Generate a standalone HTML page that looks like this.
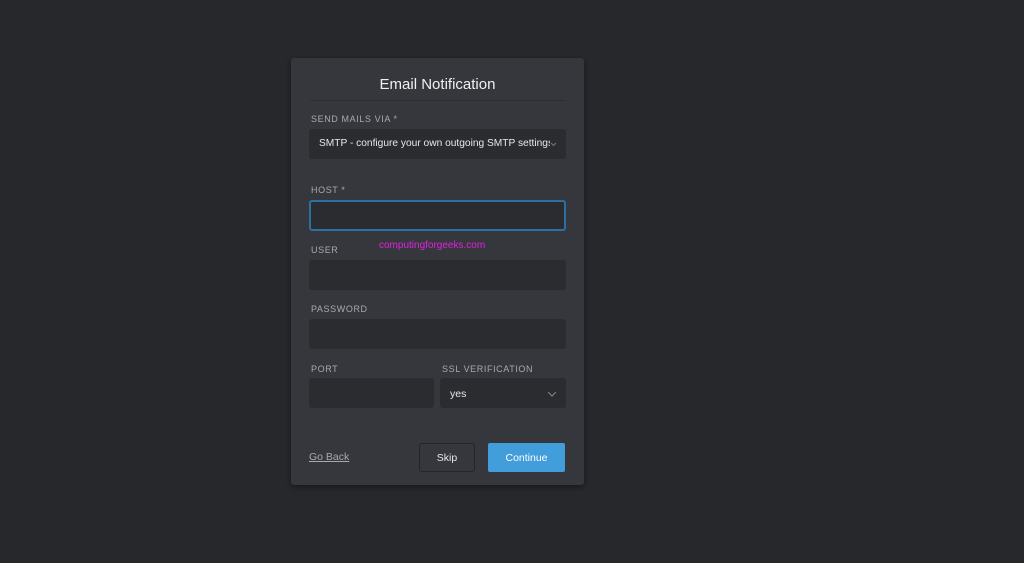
<!DOCTYPE html>
<html><head><style>
body{margin:0;width:1024px;height:563px;background:#27282c;font-family:"Liberation Sans",sans-serif;position:relative;overflow:hidden}
.card{position:absolute;left:291px;top:58px;width:293px;height:427px;background:#36373c;border-radius:3px;box-shadow:0 2px 6px rgba(0,0,0,.4)}
.a{position:absolute}
.title{width:293px;top:76px;text-align:center;color:#f0f0f2;font-size:15px}
.hr{left:310px;width:256px;top:100px;height:1px;background:#2e2f33}
.lbl{color:#a8a9ad;font-size:9px;letter-spacing:.6px}
.in{background:#2b2c30;border-radius:3px}
</style></head><body>
<div class="card"></div>
<div class="a title" style="left:291px">Email Notification</div>
<div class="a hr"></div>
<div class="a lbl" style="left:311px;top:114px">SEND MAILS VIA *</div>
<div class="a in" style="left:309px;top:129px;width:257px;height:30px"></div>
<div class="a" style="left:319px;top:138px;color:#e8e8ea;font-size:10.2px;width:231px;overflow:hidden;white-space:nowrap">SMTP - configure your own outgoing SMTP settings</div>
<svg class="a" style="left:550px;top:142px" width="7" height="5"><path d="M1 1l2.5 2.5L6 1" stroke="#777" fill="none"/></svg>
<div class="a lbl" style="left:311px;top:185px">HOST *</div>
<div class="a in" style="left:309px;top:200px;width:253px;height:27px;border:2px solid #2d6fa0"></div>
<div class="a lbl" style="left:311px;top:245px">USER</div>
<div class="a" style="left:379px;top:240px;color:#e020e0;font-size:10px">computingforgeeks.com</div>
<div class="a in" style="left:309px;top:260px;width:257px;height:30px"></div>
<div class="a lbl" style="left:311px;top:304px">PASSWORD</div>
<div class="a in" style="left:309px;top:319px;width:257px;height:30px"></div>
<div class="a lbl" style="left:311px;top:364px">PORT</div>
<div class="a lbl" style="left:442px;top:364px">SSL VERIFICATION</div>
<div class="a in" style="left:309px;top:378px;width:125px;height:30px"></div>
<div class="a in" style="left:440px;top:378px;width:126px;height:30px"></div>
<div class="a" style="left:450px;top:388px;color:#e8e8ea;font-size:10.5px">yes</div>
<svg class="a" style="left:547px;top:391px" width="10" height="6"><path d="M1 1l4 4 4-4" stroke="#888" fill="none"/></svg>
<div class="a" style="left:309px;top:451px;color:#a8a9ad;font-size:10.5px;text-decoration:underline">Go Back</div>
<div class="a" style="left:419px;top:443px;width:54px;height:27px;border:1px solid #242528;background:#36373c;border-radius:3px;color:#e8e8ea;font-size:10.5px;text-align:center;line-height:29px">Skip</div>
<div class="a" style="left:488px;top:443px;width:77px;height:29px;background:#429ddb;border-radius:2px;color:#fff;font-size:10.5px;text-align:center;line-height:30px">Continue</div>
</body></html>
